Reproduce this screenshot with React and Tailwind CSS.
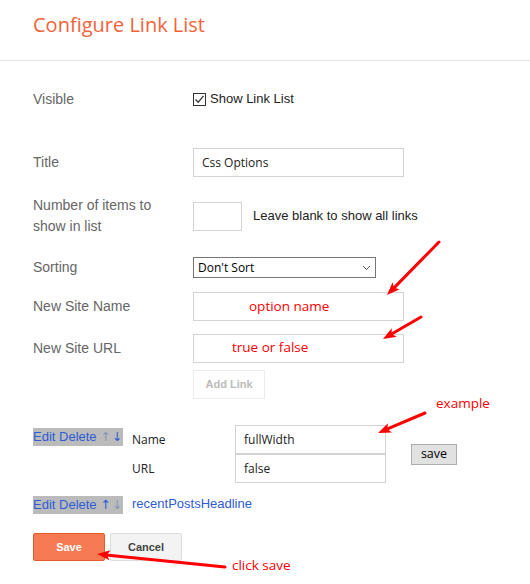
import React from 'react';

// red annotation arrows drawn on top of the form: [tailX, tailY, tipX, tipY]
const arrows = [
  [439, 242, 387, 295],
  [421, 317, 383, 339],
  [425, 413, 378, 433],
  [225, 567, 97, 554],
];

const notes = [
  { text: 'option name', cls: 'left-[249px] top-[296px]' },
  { text: 'true or false', cls: 'left-[232px] top-[337px]' },
  { text: 'example', cls: 'left-[436px] top-[393px]' },
  { text: 'click save', cls: 'left-[232px] top-[555px]' },
];

function Arrow({ x1, y1, x2, y2 }) {
  const dx = x2 - x1;
  const dy = y2 - y1;
  const len = Math.hypot(dx, dy);
  const ux = dx / len;
  const uy = dy / len;
  const head = 13;
  const half = 5;
  const bx = x2 - ux * head;
  const by = y2 - uy * head;
  const px = -uy;
  const py = ux;
  const pts = `${x2},${y2} ${bx + px * half},${by + py * half} ${bx + ux * 3},${by + uy * 3} ${bx - px * half},${by - py * half}`;
  return (
    <g>
      <line x1={x1} y1={y1} x2={bx + ux * 4} y2={by + uy * 4} stroke="#ff0000" strokeWidth="3" strokeLinecap="round" />
      <polygon points={pts} fill="#ff0000" />
    </g>
  );
}

function Label({ children }) {
  return <div className="w-[160px] shrink-0 text-[14px] leading-[21px] text-[#666]">{children}</div>;
}

function TextBox({ value, className = '' }) {
  return (
    <div className={`flex h-[29px] items-center border border-[#d3d3d3] bg-white pl-[8px] font-['Open_Sans',sans-serif] text-[12px] text-[#222] ${className}`}>
      {value}
    </div>
  );
}

// up / down arrows of a link row; the dimmed one can't be used
function MoveArrows({ dim }) {
  return (
    <span className="font-['DejaVu_Sans',sans-serif] text-[12.5px] leading-[18px]">
      <span className={dim === 'up' ? 'text-[#8798b8]' : ''}>↑</span>
      <span className={`ml-[1px] ${dim === 'down' ? 'text-[#8798b8]' : ''}`}>↓</span>
    </span>
  );
}

export default function App() {
  return (
    <div className="relative h-[584px] w-[530px] overflow-hidden bg-white font-['Liberation_Sans',Arial,sans-serif]">
      <div className="h-[61px] border-b border-[#e6e6e6] pl-[33px] pt-[11px]">
        <h1 className="font-['Open_Sans',sans-serif] text-[20px] leading-[27px] text-[#f4623a]">Configure Link List</h1>
      </div>

      <div className="pl-[33px]">
        {/* Visible */}
        <div className="mt-[28px] flex h-[20px] items-center">
          <Label>Visible</Label>
          <span className="flex h-[13px] w-[13px] items-center justify-center border border-[#333] bg-white">
            <svg width="11" height="11" viewBox="0 0 11 11">
              <polyline points="1.5,5.5 4.2,8.3 9.5,1.8" fill="none" stroke="#333" strokeWidth="1.3" />
            </svg>
          </span>
          <span className="ml-[4px] text-[13px] text-[#222]">Show Link List</span>
        </div>

        {/* Title */}
        <div className="mt-[39px] flex h-[29px] items-center">
          <Label>Title</Label>
          <TextBox value="Css Options" className="w-[211px]" />
        </div>

        {/* Number of items */}
        <div className="mt-[18px] flex h-[42px] items-center">
          <Label>
            Number of items to
            <br />
            show in list
          </Label>
          <TextBox value="" className="w-[49px]" />
          <span className="ml-[11px] text-[13px] text-[#222]">Leave blank to show all links</span>
        </div>

        {/* Sorting */}
        <div className="mt-[20px] flex h-[21px] items-center">
          <Label>Sorting</Label>
          <div className="flex h-[21px] w-[183px] items-center justify-between border border-[#767676] bg-white pl-[4px] pr-[4px] font-['Open_Sans',sans-serif] text-[12px] text-black">
            <span>Don't Sort</span>
            <svg width="9" height="6" viewBox="0 0 9 6">
              <polyline points="1,1 4.5,4.5 8,1" fill="none" stroke="#555" strokeWidth="1" />
            </svg>
          </div>
        </div>

        {/* New Site Name */}
        <div className="mt-[14px] flex h-[29px] items-center">
          <Label>New Site Name</Label>
          <TextBox value="" className="w-[211px]" />
        </div>

        {/* New Site URL */}
        <div className="mt-[13px] flex h-[29px] items-center">
          <Label>New Site URL</Label>
          <TextBox value="" className="w-[211px]" />
        </div>

        {/* Add Link */}
        <div className="mt-[7px] flex h-[29px]">
          <div className="w-[160px] shrink-0" />
          <button className="h-[29px] w-[72px] border border-[#ebebeb] bg-white text-[11px] font-bold text-[#bbb]">Add Link</button>
        </div>

        {/* link being edited */}
        <div className="mt-[25px] flex">
          <div className="w-[99px] shrink-0">
            <span className="inline-block h-[18px] bg-[#bbbbbb] pr-[1px] text-[13px] leading-[18px] text-[#2e5bd6]">
              Edit Delete <MoveArrows dim="up" />
            </span>
          </div>
          <div className="mt-[1px] flex items-center">
            <div className="font-['Open_Sans',sans-serif] text-[12px] text-[#222]">
              <div className="flex h-[29px] items-center">
                <span className="w-[103px]">Name</span>
                <TextBox value="fullWidth" className="w-[151px]" />
              </div>
              <div className="flex h-[29px] items-center">
                <span className="w-[103px]">URL</span>
                <TextBox value="false" className="w-[151px]" />
              </div>
            </div>
            <button className="ml-[25px] h-[21px] w-[46px] border border-[#adadad] bg-[#e1e1e1] font-['Open_Sans',sans-serif] text-[12.5px] leading-[18px] text-black">
              save
            </button>
          </div>
        </div>

        {/* saved link */}
        <div className="mt-[11px] flex h-[19px] items-center">
          <div className="w-[99px] shrink-0">
            <span className="inline-block h-[18px] bg-[#bbbbbb] pr-[1px] text-[13px] leading-[18px] text-[#2e5bd6]">
              Edit Delete <MoveArrows dim="down" />
            </span>
          </div>
          <span className="text-[13px] text-[#2e5bd6]">recentPostsHeadline</span>
        </div>

        {/* actions */}
        <div className="mt-[20px] flex gap-[5px]">
          <button className="h-[28px] w-[72px] rounded-[2px] border border-[#e65a2f] bg-[#f77b52] text-[11px] font-bold text-white">Save</button>
          <button className="h-[28px] w-[72px] rounded-[2px] border border-[#dcdcdc] bg-[#f3f3f3] text-[11px] font-bold text-[#444]">Cancel</button>
        </div>
      </div>

      {/* annotations */}
      <svg className="pointer-events-none absolute left-0 top-0" width="530" height="584">
        {arrows.map(([x1, y1, x2, y2], i) => (
          <Arrow key={i} x1={x1} y1={y1} x2={x2} y2={y2} />
        ))}
      </svg>
      {notes.map((n) => (
        <span
          key={n.text}
          className={`absolute font-['Open_Sans',sans-serif] text-[13.5px] leading-[20px] text-[#ff0000] ${n.cls}`}
        >
          {n.text}
        </span>
      ))}
    </div>
  );
}
